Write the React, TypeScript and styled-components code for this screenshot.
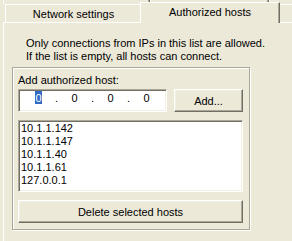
import React from 'react';
import styled, { createGlobalStyle } from 'styled-components';

const face = '#ECE9D8';
const light = '#F1EFE2';
const shadow = '#ACA899';
const dark = '#716F64';

const GlobalStyle = createGlobalStyle`
  html, body {
    margin: 0;
    padding: 0;
    background: ${face};
    overflow: hidden;
  }
  body {
    font-family: "Liberation Sans", Arial, sans-serif;
    font-size: 11px;
    color: #000;
  }
`;

// the dialog is cropped: its right and bottom edges lie outside the shot
const Frame = styled.div`
  box-sizing: border-box;
  display: flex;
  flex-direction: column;
  width: 292px;
  height: 241px;
  padding-left: 3px;
  overflow: hidden;
`;

const UpperRow = styled.div`
  display: flex;
  flex: none;
  height: 4px;
  overflow: hidden;
`;

const UpperTab = styled.div<{ $width: number }>`
  width: ${(p) => p.$width}px;
  flex: none;
  box-sizing: border-box;
  height: 4px;
  border-left: 1px solid #fff;
  border-right: 1px solid ${dark};
  box-shadow: inset -1px 0 0 ${shadow};
`;

const TabRow = styled.div`
  display: flex;
  flex: none;
  align-items: flex-start;
  height: 21px;
  margin-top: -2px;
  margin-bottom: -1px;
  padding-left: 2px;
  overflow: hidden;
`;

const Tab = styled.div<{ $width: number; $active?: boolean }>`
  flex: none;
  box-sizing: border-box;
  width: ${(p) => p.$width}px;
  height: ${(p) => (p.$active ? 21 : 18)}px;
  margin: ${(p) => (p.$active ? '0 -2px' : '2px 0 0')};
  padding-top: 3px;
  line-height: 13px;
  text-align: center;
  white-space: nowrap;
  overflow: hidden;
  background: ${face};
  border-top: 1px solid #fff;
  border-left: 1px solid #fff;
  border-right: 1px solid ${dark};
  box-shadow: inset -1px 0 0 ${shadow};
  position: ${(p) => (p.$active ? 'relative' : 'static')};
  z-index: ${(p) => (p.$active ? 1 : 'auto')};
`;

const Panel = styled.div`
  flex: 1;
  border-top: 1px solid #fff;
  border-left: 1px solid #fff;
  padding: 0 8px;
`;

const Intro = styled.div`
  padding: 14px 0 0 14px;
  line-height: 13px;
`;

const GroupBox = styled.div`
  box-sizing: border-box;
  width: 238px;
  margin-top: 4px;
  padding: 6px 6px 6px 5px;
  border: 1px solid ${shadow};
  box-shadow: inset 1px 1px 0 #fff, 1px 1px 0 #fff;
`;

const Label = styled.div`
  line-height: 13px;
`;

const InputRow = styled.div`
  display: flex;
  gap: 7px;
  margin-top: 2px;
`;

const Sunken = styled.div`
  box-sizing: border-box;
  background: #fff;
  border: 1px solid;
  border-color: ${shadow} #fff #fff ${shadow};
  box-shadow: inset 1px 1px 0 ${dark}, inset -1px -1px 0 ${light};
`;

const IpField = styled(Sunken)`
  display: flex;
  align-items: flex-start;
  width: 149px;
  height: 23px;
  padding: 1px 0 0 7px;
`;

const Segment = styled.div<{ $width: number }>`
  display: flex;
  justify-content: center;
  width: ${(p) => p.$width}px;
  line-height: 15px;
`;

const Selected = styled.span`
  display: block;
  width: 7px;
  height: 13px;
  overflow: visible;
  text-align: center;
  background: #316AC5;
  color: #fff;
`;

const Button = styled.div<{ $width?: number }>`
  box-sizing: border-box;
  display: flex;
  align-items: center;
  justify-content: center;
  width: ${(p) => (p.$width ? `${p.$width}px` : '100%')};
  height: 23px;
  background: ${face};
  border: 1px solid;
  border-color: #fff ${dark} ${dark} #fff;
  box-shadow: inset -1px -1px 0 ${shadow}, inset 1px 1px 0 ${light};
`;

const HostList = styled(Sunken)`
  height: 72px;
  margin: 8px 0;
  padding: 1px 0 0 2px;
`;

const Host = styled.div`
  line-height: 13px;
`;

const hosts = ['10.1.1.142', '10.1.1.147', '10.1.1.40', '10.1.1.61', '127.0.0.1'];

const App = () => (
  <Frame>
    <GlobalStyle />
    <UpperRow>
      <UpperTab $width={147} />
      <UpperTab $width={119} />
      <UpperTab $width={80} />
    </UpperRow>
    <TabRow>
      <Tab $width={137}>Network settings</Tab>
      <Tab $width={140} $active>Authorized hosts</Tab>
      <Tab $width={80} />
    </TabRow>
    <Panel>
      <Intro>
        Only connections from IPs in this list are allowed.
        <br />
        If the list is empty, all hosts can connect.
      </Intro>
      <GroupBox>
        <Label>Add authorized host:</Label>
        <InputRow>
          <IpField>
            <Segment $width={25}><Selected>0</Selected></Segment>
            <Segment $width={11}>.</Segment>
            <Segment $width={25}>0</Segment>
            <Segment $width={11}>.</Segment>
            <Segment $width={25}>0</Segment>
            <Segment $width={11}>.</Segment>
            <Segment $width={25}>0</Segment>
          </IpField>
          <Button $width={69}>Add...</Button>
        </InputRow>
        <HostList>
          {hosts.map((h) => (
            <Host key={h}>{h}</Host>
          ))}
        </HostList>
        <Button>Delete selected hosts</Button>
      </GroupBox>
    </Panel>
  </Frame>
);

export default App;
